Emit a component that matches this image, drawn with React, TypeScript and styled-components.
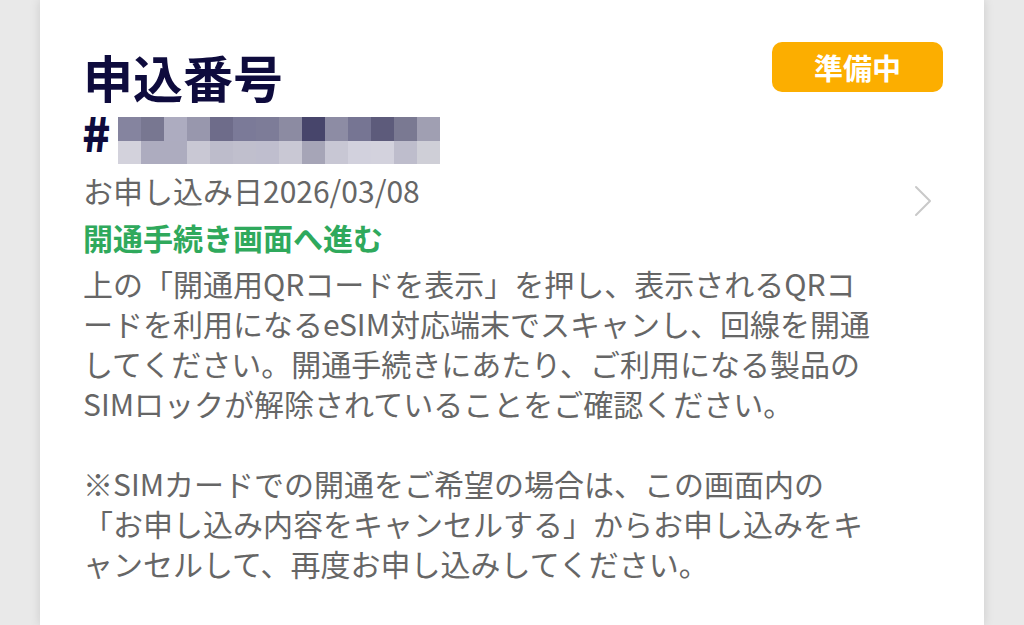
import React from "react";
import styled, { createGlobalStyle } from "styled-components";

const GlobalStyle = createGlobalStyle`
  html, body {
    margin: 0;
    padding: 0;
    background: #e9e9e9;
  }
  body {
    font-family: "Noto Sans CJK JP", "Noto Sans", sans-serif;
    overflow: hidden;
  }
  #root {
    height: 625px;
  }
`;

const Page = styled.div`
  height: 625px;
  display: flex;
  justify-content: center;
  background: #e9e9e9;
  overflow: hidden;
`;

const Card = styled.section`
  width: 944px;
  height: 100%;
  box-sizing: border-box;
  background: #ffffff;
  box-shadow: 0 0 10px rgba(0, 0, 0, 0.13);
  padding: 42px 41px 0 43px;
  display: flex;
  flex-direction: column;
`;

const HeaderRow = styled.div`
  display: flex;
  justify-content: space-between;
  align-items: flex-start;
`;

const Title = styled.h1`
  margin: 6px 0 0;
  font-size: 50px;
  line-height: 56px;
  font-weight: 700;
  color: #0e0b3d;
  letter-spacing: 0;
`;

const Badge = styled.span`
  width: 171px;
  height: 50px;
  border-radius: 10px;
  background: #fcae00;
  color: #ffffff;
  font-size: 29px;
  font-weight: 700;
  display: flex;
  align-items: center;
  justify-content: center;
  line-height: 1;
`;

const NumberRow = styled.div`
  display: flex;
  align-items: flex-start;
  margin-top: 6px;
`;

const Hash = styled.span`
  font-size: 47px;
  line-height: 44px;
  font-weight: 900;
  color: #0e0b3d;
  width: 35px;
  margin-left: -1px;
  margin-right: 1px;
`;

const Mosaic = styled.div`
  margin-top: 7px;
  display: grid;
  grid-template-columns: repeat(14, 23px);
  grid-auto-rows: 23.5px;
`;

const Tile = styled.span<{ $c: string }>`
  background: ${(p) => p.$c};
`;

const BodyRow = styled.div`
  display: flex;
  justify-content: space-between;
  align-items: flex-start;
  margin-top: 6px;
`;

const TextColumn = styled.div`
  display: flex;
  flex-direction: column;
  width: 830px;
`;

const DateLine = styled.div`
  font-size: 30px;
  line-height: 40px;
  color: #666666;
`;

const ActionLink = styled.div`
  margin-top: 7px;
  font-size: 30px;
  line-height: 40px;
  font-weight: 700;
  color: #2fa95c;
`;

const Paragraph = styled.p`
  margin: 6px 0 0;
  font-size: 30px;
  line-height: 40px;
  color: #666666;
  white-space: nowrap;
`;

const ChevronBox = styled.div`
  width: 30px;
  margin-top: 15px;
  margin-right: 10px;
  display: flex;
  justify-content: flex-end;
`;

const row1 = [
  "#85849f", "#787791", "#adacc0", "#9897ad", "#6e6c8a", "#7b7a98", "#7d7c98",
  "#8c8ba2", "#47456b", "#8d8ca4", "#767593", "#5d5b7b", "#7a7992", "#a09fb2",
];
const row2 = [
  "#d3d2dc", "#adacbf", "#adacbf", "#c9c8d4", "#bdbccb", "#c0bfcd", "#bfbece",
  "#c9c8d4", "#a6a5b7", "#c8c7d4", "#d2d1dd", "#d3d2dd", "#bebdcc", "#cfcfd7",
];

export default function App() {
  return (
    <>
      <GlobalStyle />
      <Page>
        <Card>
          <HeaderRow>
            <Title>申込番号</Title>
            <Badge>準備中</Badge>
          </HeaderRow>
          <NumberRow>
            <Hash>#</Hash>
            <Mosaic aria-hidden>
              {[...row1, ...row2].map((c, i) => (
                <Tile key={i} $c={c} />
              ))}
            </Mosaic>
          </NumberRow>
          <BodyRow>
            <TextColumn>
              <DateLine>お申し込み日2026/03/08</DateLine>
              <ActionLink>開通手続き画面へ進む</ActionLink>
              <Paragraph>
                上の「開通用QRコードを表示」を押し、表示されるQRコ
                <br />
                ードを利用になるeSIM対応端末でスキャンし、回線を開通
                <br />
                してください。開通手続きにあたり、ご利用になる製品の
                <br />
                SIMロックが解除されていることをご確認ください。
                <br />
                <br />
                ※SIMカードでの開通をご希望の場合は、この画面内の
                <br />
                「お申し込み内容をキャンセルする」からお申し込みをキ
                <br />
                ャンセルして、再度お申し込みしてください。
              </Paragraph>
            </TextColumn>
            <ChevronBox>
              <svg width="20" height="32" viewBox="0 0 20 32" fill="none">
                <polyline
                  points="3,2 17,16 3,30"
                  stroke="#c9c9c9"
                  strokeWidth="2"
                  strokeLinecap="round"
                  strokeLinejoin="round"
                />
              </svg>
            </ChevronBox>
          </BodyRow>
        </Card>
      </Page>
    </>
  );
}
